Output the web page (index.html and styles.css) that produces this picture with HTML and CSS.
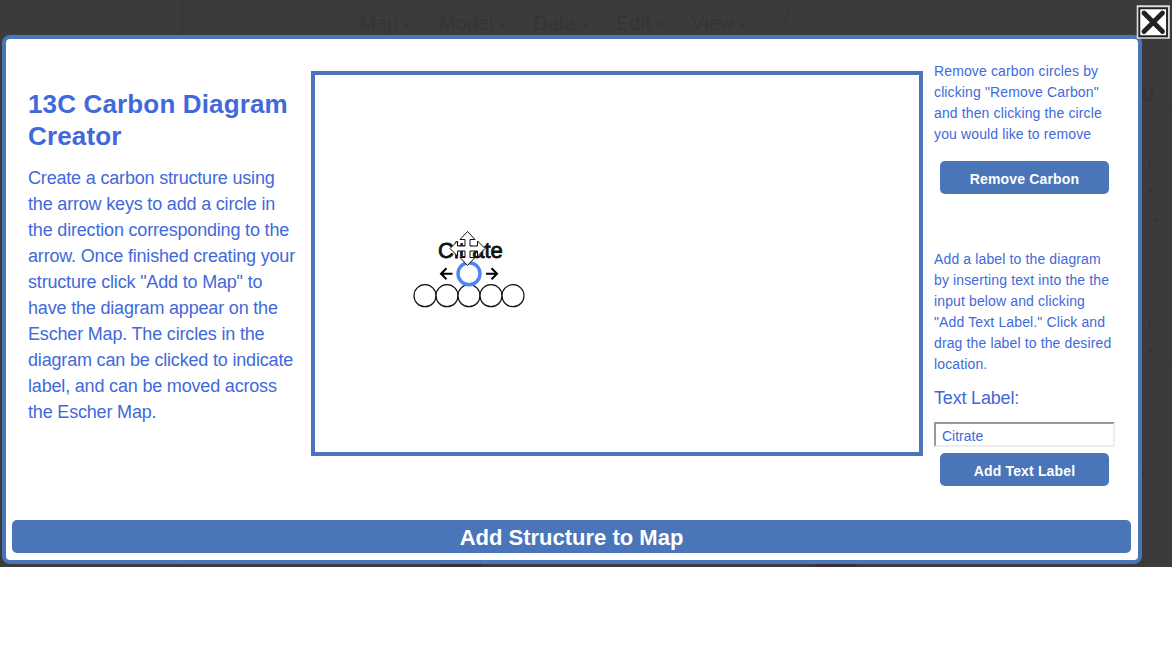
FILE: index.html
```html
<!DOCTYPE html>
<html lang="en">
<head>
<meta charset="utf-8">
<title>13C Carbon Diagram Creator</title>
<link rel="stylesheet" href="styles.css">
</head>
<body>
<div class="backdrop">
  <nav class="menu">
    <span class="item map">Map<i class="caret"></i></span>
    <span class="item model">Model<i class="caret"></i></span>
    <span class="item data">Data<i class="caret"></i></span>
    <span class="item edit">Edit<i class="caret"></i></span>
    <span class="item view">View<i class="caret"></i></span>
    <span class="help">?</span>
  </nav>
  <svg class="behind" width="1172" height="567" viewBox="0 0 1172 567">
    <path d="M183 0v567" stroke="#393939" stroke-width="5"/>
    <path d="M346.500 35v-32.500h450v32.500" stroke="#393939" fill="none"/>
    <text x="1141" y="100" class="heading-end">u</text>
    <path d="M1141 100.500h12" stroke="#343436"/>
    <path d="M1141 106.500h31M1141 365.500h31" stroke="#393939"/>
    <path d="M1148 158l5 5-5 5zM1148 186l5 5-5 5zM1151 218h9l-4.500 5zM1148 318l5 5-5 5zM1148 346l5 5-5 5z" fill="#34363b"/>
    <path d="M1141 470h3v7h-3z" fill="#343434"/>
    <path d="M440 564h21v3h-21zM815 564h21v3h-21z" fill="#3b2e30"/>
    <path d="M461 564h21v3h-21zM836 564h21v3h-21z" fill="#33323a"/>
  </svg>
  <main class="modal">
    <div class="columns">
      <section class="intro">
        <h1>13C Carbon Diagram<br>Creator</h1>
        <p>Create a carbon structure using<br>the arrow keys to add a circle in<br>the direction corresponding to the<br>arrow. Once finished creating your<br>structure click "Add to Map" to<br>have the diagram appear on the<br>Escher Map. The circles in the<br>diagram can be clicked to indicate<br>label, and can be moved across<br>the Escher Map.</p>
      </section>
      <section class="canvas">
        <svg width="604" height="377" viewBox="315 75 604 377">
          <text x="438" y="258" class="diagram-label">Citrate</text>
          <g fill="#fff" stroke="#111" stroke-width="1.200">
            <circle cx="425" cy="295.700" r="11"/><circle cx="447" cy="295.700" r="11"/><circle cx="469" cy="295.700" r="11"/><circle cx="491" cy="295.700" r="11"/><circle cx="513" cy="295.700" r="11"/>
          </g>
          <circle cx="469" cy="273.700" r="11" fill="#fff" stroke="#4d84fa" stroke-width="3.400"/>
          <path d="M452.500 273.700h-11M446.500 268.200l-5.500 5.500 5.500 5.500M486 273.700h11M491.500 268.200l5.500 5.500-5.500 5.500" fill="none" stroke="#000" stroke-width="2"/>
          <path d="M467.500 231.500l7.500 8h-5v6.500h7.500v-5l7.500 7.500-7.500 7.500v-5h-7.500v6.500h5l-7.500 8-7.500-8h5v-6.500h-7.500v5l-7.500-7.500 7.500-7.500v5h7.500v-6.500h-5z" fill="#fff" stroke="#111" stroke-width="1"/>
        </svg>
      </section>
      <aside class="tools">
        <p>Remove carbon circles by<br>clicking "Remove Carbon"<br>and then clicking the circle<br>you would like to remove</p>
        <button class="remove">Remove Carbon</button>
        <p>Add a label to the diagram<br>by inserting text into the the<br>input below and clicking<br>"Add Text Label." Click and<br>drag the label to the desired<br>location.</p>
        <label for="text-label">Text Label:</label>
        <input id="text-label" type="text" value="Citrate">
        <button>Add Text Label</button>
      </aside>
    </div>
    <button class="submit">Add Structure to Map</button>
  </main>
  <svg class="close" width="34" height="34" viewBox="1136 5 34 34">
    <path d="M1136.700 5.200h33.100v33.500h-33.100z" fill="#ddd"/>
    <path d="M1139.300 8.300h27.700v28h-27.700z" fill="#fff" stroke="#222" stroke-width="1.900"/>
    <path d="M1144 13l18.500 18.500M1162.500 13l-18.500 18.500" stroke="#222" stroke-width="4.800" stroke-linecap="round"/>
  </svg>
</div>
</body>
</html>
```

FILE: styles.css
```css
* { box-sizing: border-box; }
body {
  margin: 0;
  background: #fff;
  font-family: "Liberation Sans", Arial, sans-serif;
  color: #4169db;
}
.backdrop {
  position: relative;
  height: 567px;
  padding: 34.500px 0 0 2px;
  background: #3b3b3b;
}
.menu {
  position: absolute;
  left: 359.500px;
  top: 12px;
  width: 440px;
  color: #343539;
  font-size: 20px;
  line-height: 23px;
  display: flex;
}
.item { display: flex; align-items: center; gap: 5px; }
.map { width: 79.500px; }
.model { width: 94.500px; }
.data { width: 82.500px; }
.edit { width: 75px; }
.view { width: 90px; }
.caret {
  margin-top: 3px;
  border: 4.500px solid transparent;
  border-top-color: #343539;
  border-bottom: 0;
}
.help { font-size: 18px; line-height: 10px; }
.behind { position: absolute; left: 0; top: 0; }
.heading-end { font-size: 21px; font-weight: bold; font-style: italic; fill: #343436; }
.modal {
  position: relative;
  display: flex;
  flex-direction: column;
  justify-content: space-between;
  width: 1139.500px;
  height: 529.500px;
  padding: 0 6px 7px;
  border: 4px solid #4a75b9;
  border-radius: 8px;
  background: #fff;
}
.columns {
  display: grid;
  grid-template-columns: 298.500px 612.500px 1fr;
  white-space: nowrap;
}
.intro { padding: 49.500px 0 0 16px; }
h1 {
  margin: 0 0 13px;
  font-size: 26px;
  line-height: 32px;
  letter-spacing: 0.150px;
}
.intro p { margin: 0; font-size: 18px; line-height: 26px; letter-spacing: -0.180px; }
.canvas {
  width: 612.500px;
  height: 385px;
  margin-top: 32.500px;
  border: 4px solid #4a75b9;
}
.canvas svg { display: block; }
.diagram-label { font-size: 22px; fill: #111; stroke: #111; stroke-width: 0.800px; }
.tools {
  display: flex;
  flex-direction: column;
  align-items: flex-start;
  padding: 22px 0 0 11px;
}
.tools p { margin: 0; font-size: 14px; line-height: 21px; letter-spacing: 0.130px; }
.tools label { margin: 10.500px 0 11px; font-size: 18px; line-height: 26px; letter-spacing: -0.180px; }
.tools input {
  width: 181px;
  height: 25px;
  padding: 2px 6px 0;
  border: 2px solid #eee;
  border-color: #999 #eee #eee #999;
  border-radius: 0;
  color: #4169db;
  font: 14px "Liberation Sans", Arial, sans-serif;
  background: #fff;
}
button {
  width: 169px;
  height: 33px;
  margin: 6px 0 0 6px;
  padding: 2px 0 0;
  border: 0;
  border-radius: 5px;
  background: #4a75b9;
  color: #fff;
  font: bold 14px "Liberation Sans", Arial, sans-serif;
  letter-spacing: 0.160px;
}
.tools .remove { margin: 16.500px 0 54.500px 6px; }
.modal .submit {
  width: 1119px;
  margin: 0;
  font-size: 22px;
  letter-spacing: 0;
}
.close { position: absolute; left: 1136px; top: 5px; }
```
